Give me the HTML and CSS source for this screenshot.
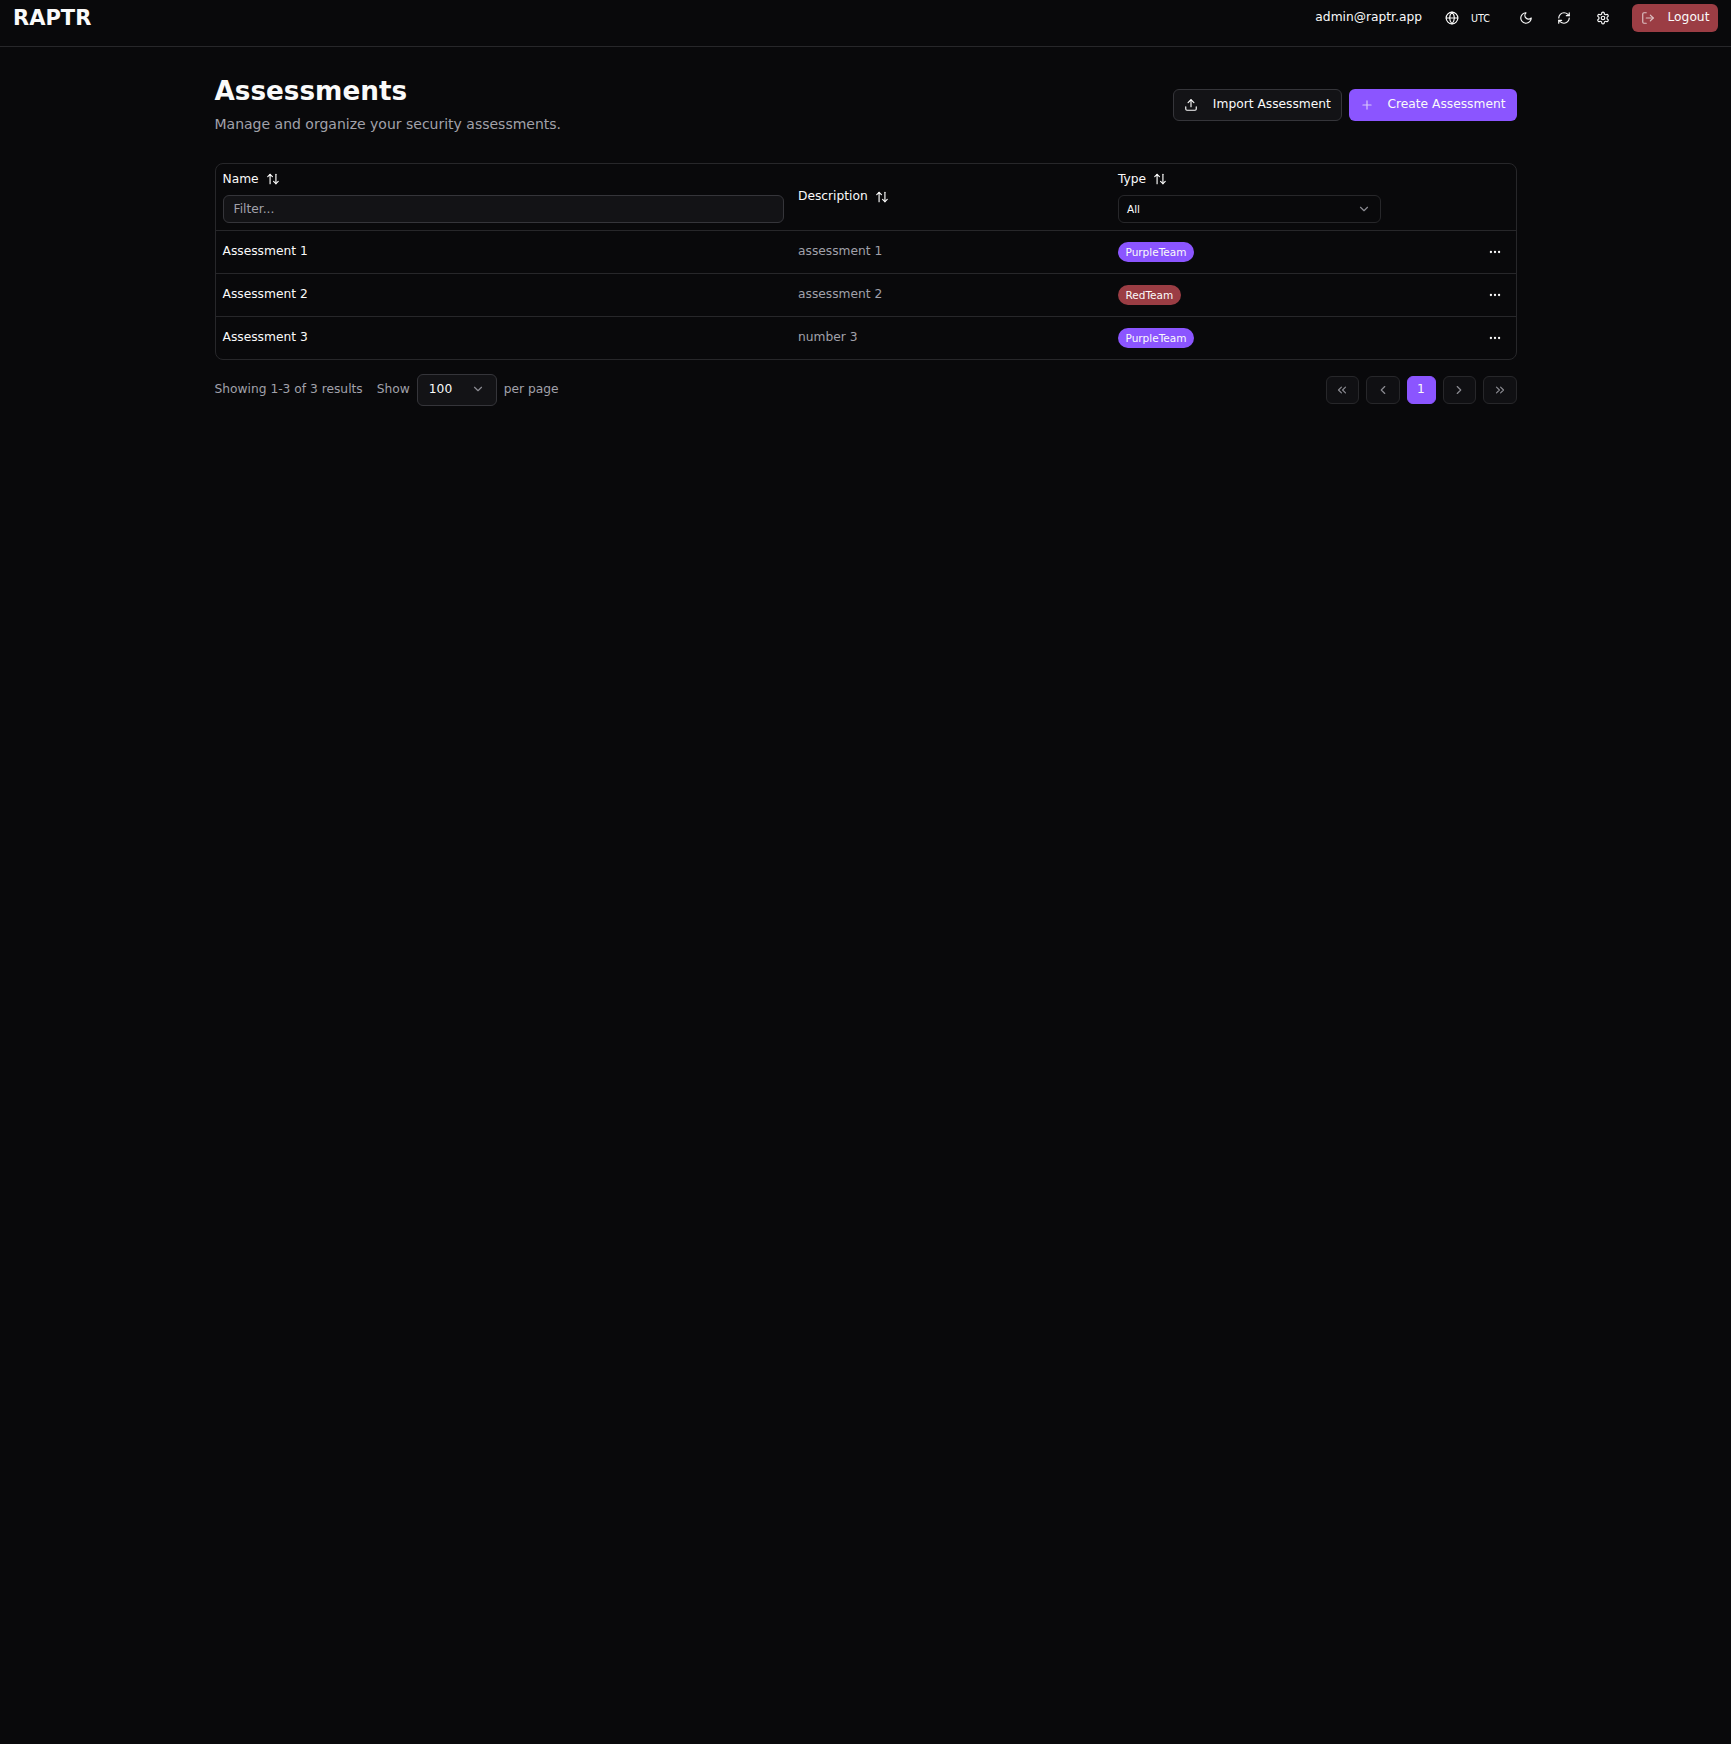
FILE: index.html
```html
<!DOCTYPE html>
<html lang="en">
<head>
    <meta charset="UTF-8">
    <meta name="viewport" content="width=device-width, initial-scale=1.0">
    <title>RAPTR - Assessments</title>
    <link rel="stylesheet" href="styles.css">
</head>
<body>

    <header class="topbar">
        <div class="logo">RAPTR</div>
        <div class="topbar-right">
            <span class="user-email">admin@raptr.app</span>
            <div class="tz">
                <svg class="icon icon-14" viewBox="0 0 24 24"><circle cx="12" cy="12" r="10"/><path d="M12 2a14.5 14.5 0 0 0 0 20 14.5 14.5 0 0 0 0-20"/><path d="M2 12h20"/></svg>
                <span class="tz-label">UTC</span>
            </div>
            <button class="icon-btn"><svg class="icon icon-14" viewBox="0 0 24 24"><path d="M12 3a6 6 0 0 0 9 9 9 9 0 1 1-9-9Z"/></svg></button>
            <button class="icon-btn"><svg class="icon icon-14" viewBox="0 0 24 24"><path d="M3 12a9 9 0 0 1 9-9 9.75 9.75 0 0 1 6.74 2.74L21 8"/><path d="M21 3v5h-5"/><path d="M21 12a9 9 0 0 1-9 9 9.75 9.75 0 0 1-6.74-2.74L3 16"/><path d="M8 16H3v5"/></svg></button>
            <button class="icon-btn"><svg class="icon icon-14" viewBox="0 0 24 24"><path d="M12.22 2h-.44a2 2 0 0 0-2 2v.18a2 2 0 0 1-1 1.73l-.43.25a2 2 0 0 1-2 0l-.15-.08a2 2 0 0 0-2.73.73l-.22.38a2 2 0 0 0 .73 2.73l.15.1a2 2 0 0 1 1 1.72v.51a2 2 0 0 1-1 1.74l-.15.09a2 2 0 0 0-.73 2.73l.22.38a2 2 0 0 0 2.73.73l.15-.08a2 2 0 0 1 2 0l.43.25a2 2 0 0 1 1 1.73V20a2 2 0 0 0 2 2h.44a2 2 0 0 0 2-2v-.18a2 2 0 0 1 1-1.73l.43-.25a2 2 0 0 1 2 0l.15.08a2 2 0 0 0 2.73-.73l.22-.39a2 2 0 0 0-.73-2.73l-.15-.08a2 2 0 0 1-1-1.74v-.5a2 2 0 0 1 1-1.74l.15-.09a2 2 0 0 0 .73-2.73l-.22-.38a2 2 0 0 0-2.73-.73l-.15.08a2 2 0 0 1-2 0l-.43-.25a2 2 0 0 1-1-1.73V4a2 2 0 0 0-2-2z"/><circle cx="12" cy="12" r="3"/></svg></button>
            <button class="btn btn-logout">
                <svg class="icon icon-14 dim" viewBox="0 0 24 24"><path d="M9 21H5a2 2 0 0 1-2-2V5a2 2 0 0 1 2-2h4"/><polyline points="16 17 21 12 16 7"/><line x1="21" y1="12" x2="9" y2="12"/></svg>
                <span>Logout</span>
            </button>
        </div>
    </header>

    <main class="page">
        <div class="page-head">
            <div>
                <h1>Assessments</h1>
                <p class="subtitle">Manage and organize your security assessments.</p>
            </div>
            <div class="head-actions">
                <button class="btn btn-outline">
                    <svg class="icon icon-14" viewBox="0 0 24 24"><path d="M21 15v4a2 2 0 0 1-2 2H5a2 2 0 0 1-2-2v-4"/><polyline points="17 8 12 3 7 8"/><line x1="12" y1="3" x2="12" y2="15"/></svg>
                    <span>Import Assessment</span>
                </button>
                <button class="btn btn-primary">
                    <svg class="icon icon-14 dim" viewBox="0 0 24 24"><path d="M5 12h14"/><path d="M12 5v14"/></svg>
                    <span>Create Assessment</span>
                </button>
            </div>
        </div>

        <div class="table-wrap">
            <table>
                <colgroup>
                    <col class="col-name">
                    <col class="col-desc">
                    <col class="col-type">
                    <col>
                </colgroup>
                <thead>
                    <tr>
                        <th>
                            <div class="th-label">Name <svg class="icon icon-14 sort" viewBox="0 0 24 24"><path d="m21 16-4 4-4-4"/><path d="M17 20V4"/><path d="m3 8 4-4 4 4"/><path d="M7 4v16"/></svg></div>
                            <input class="filter-input" type="text" placeholder="Filter...">
                        </th>
                        <th class="th-desc">
                            <div class="th-label">Description <svg class="icon icon-14 sort" viewBox="0 0 24 24"><path d="m21 16-4 4-4-4"/><path d="M17 20V4"/><path d="m3 8 4-4 4 4"/><path d="M7 4v16"/></svg></div>
                        </th>
                        <th>
                            <div class="th-label">Type <svg class="icon icon-14 sort" viewBox="0 0 24 24"><path d="m21 16-4 4-4-4"/><path d="M17 20V4"/><path d="m3 8 4-4 4 4"/><path d="M7 4v16"/></svg></div>
                            <div class="filter-select">
                                <span>All</span>
                                <svg class="icon icon-14 muted" viewBox="0 0 24 24"><path d="m6 9 6 6 6-6"/></svg>
                            </div>
                        </th>
                        <th></th>
                    </tr>
                </thead>
                <tbody>
                    <tr>
                        <td class="cell-name">Assessment 1</td>
                        <td class="cell-desc">assessment 1</td>
                        <td><span class="badge badge-purple">PurpleTeam</span></td>
                        <td class="cell-actions"><svg class="icon icon-14" viewBox="0 0 24 24"><circle cx="12" cy="12" r="1"/><circle cx="19" cy="12" r="1"/><circle cx="5" cy="12" r="1"/></svg></td>
                    </tr>
                    <tr>
                        <td class="cell-name">Assessment 2</td>
                        <td class="cell-desc">assessment 2</td>
                        <td><span class="badge badge-red">RedTeam</span></td>
                        <td class="cell-actions"><svg class="icon icon-14" viewBox="0 0 24 24"><circle cx="12" cy="12" r="1"/><circle cx="19" cy="12" r="1"/><circle cx="5" cy="12" r="1"/></svg></td>
                    </tr>
                    <tr>
                        <td class="cell-name">Assessment 3</td>
                        <td class="cell-desc">number 3</td>
                        <td><span class="badge badge-purple">PurpleTeam</span></td>
                        <td class="cell-actions"><svg class="icon icon-14" viewBox="0 0 24 24"><circle cx="12" cy="12" r="1"/><circle cx="19" cy="12" r="1"/><circle cx="5" cy="12" r="1"/></svg></td>
                    </tr>
                </tbody>
            </table>
        </div>

        <div class="table-foot">
            <div class="foot-left">
                <span class="foot-text results">Showing 1-3 of 3 results</span>
                <span class="foot-text">Show</span>
                <div class="per-page">
                    <span>100</span>
                    <svg class="icon icon-14 muted" viewBox="0 0 24 24"><path d="m6 9 6 6 6-6"/></svg>
                </div>
                <span class="foot-text">per page</span>
            </div>
            <div class="pager">
                <button class="page-btn"><svg class="icon icon-14" viewBox="0 0 24 24"><path d="m11 17-5-5 5-5"/><path d="m18 17-5-5 5-5"/></svg></button>
                <button class="page-btn"><svg class="icon icon-14" viewBox="0 0 24 24"><path d="m15 18-6-6 6-6"/></svg></button>
                <button class="page-btn page-current">1</button>
                <button class="page-btn"><svg class="icon icon-14" viewBox="0 0 24 24"><path d="m9 18 6-6-6-6"/></svg></button>
                <button class="page-btn"><svg class="icon icon-14" viewBox="0 0 24 24"><path d="m6 17 5-5-5-5"/><path d="m13 17 5-5-5-5"/></svg></button>
            </div>
        </div>
    </main>

</body>
</html>
```

FILE: styles.css
```css
* {
    box-sizing: border-box;
}
html, body {
    height: 100%;
}
body {
    margin: 0;
    background: #09090b;
    color: #fafafa;
    font-family: "DejaVu Sans", sans-serif;
    font-size: 12.25px;
}
button {
    font-family: inherit;
    color: inherit;
    cursor: pointer;
}
.icon {
    fill: none;
    stroke: currentColor;
    stroke-width: 2;
    stroke-linecap: round;
    stroke-linejoin: round;
    flex: none;
}
.icon-14 {
    width: 14px;
    height: 14px;
}
.dim {
    opacity: 0.7;
}
.muted {
    color: #8b8b92;
}

/* top bar */
.topbar {
    height: 47px;
    border-bottom: 1px solid #27272a;
    padding: 4px 13px 0 13px;
    display: flex;
    justify-content: space-between;
    align-items: flex-start;
}
.logo {
    font-size: 21px;
    font-weight: 700;
    line-height: 28px;
}
.topbar-right {
    display: flex;
    align-items: center;
    height: 28px;
}
.user-email {
    margin-right: 23px;
    margin-bottom: 3px;
}
.tz {
    display: flex;
    align-items: center;
    gap: 12px;
    margin-right: 16.5px;
}
.tz-label {
    font-size: 9.6px;
}
.icon-btn {
    width: 38.5px;
    height: 28px;
    background: none;
    border: none;
    padding: 0;
    display: flex;
    align-items: center;
    justify-content: center;
}
.btn {
    display: inline-flex;
    align-items: center;
    border-radius: 6px;
    border: 1px solid transparent;
    font-size: 12.25px;
    padding: 0;
}
.btn-logout {
    width: 86px;
    height: 28px;
    margin-left: 10px;
    background: #9b3d44;
    padding-left: 8px;
    gap: 12.5px;
}
.btn-logout span {
    margin-bottom: 3px;
}

/* page */
.page {
    width: 1302px;
    margin: 0 auto;
}
.page-head {
    display: flex;
    justify-content: space-between;
    align-items: center;
    height: 116px;
    padding-bottom: 3px;
}
h1 {
    margin: 0 0 5px;
    font-size: 26.25px;
    font-weight: 700;
    line-height: 36px;
}
.subtitle {
    margin: 0;
    font-size: 14px;
    line-height: 20px;
    color: #a1a1aa;
}
.head-actions {
    display: flex;
    gap: 7px;
    margin-top: 3px;
}
.head-actions .btn {
    height: 32px;
    gap: 14.5px;
    padding: 0 10px 2.5px 10px;
}
.head-actions .btn-primary {
    gap: 13.5px;
}
.head-actions .icon {
    margin-top: 2.5px;
}
.btn-outline {
    background: #131316;
    border-color: #35353a;
}
.btn-primary {
    background: #8b55ff;
}

/* table */
.table-wrap {
    border: 1px solid #27272a;
    border-radius: 8px;
}
table {
    width: 100%;
    border-collapse: collapse;
    table-layout: fixed;
}
.col-name {
    width: 575.5px;
}
.col-desc {
    width: 320px;
}
.col-type {
    width: 280px;
}
th {
    height: 66px;
    padding: 0 7px 2px;
    text-align: left;
    font-weight: 400;
    vertical-align: middle;
    border-bottom: 1px solid #27272a;
}
.th-label {
    display: flex;
    align-items: center;
    gap: 7px;
    line-height: 20px;
}
.sort {
    margin-top: 1px;
}
.th-desc .sort {
    margin-top: 3px;
}
.filter-input {
    display: block;
    width: 561px;
    height: 28px;
    margin: 6px 0 0 0;
    padding: 0 10px;
    background: #131316;
    border: 1px solid #35353a;
    border-radius: 6px;
    color: #fafafa;
    font-family: inherit;
    font-size: 12.25px;
    outline: none;
}
.filter-input::placeholder {
    color: #a1a1aa;
}
.filter-select {
    display: flex;
    align-items: center;
    justify-content: space-between;
    width: 263px;
    height: 28px;
    margin-top: 6px;
    padding: 0 9px 0 8px;
    border: 1px solid #27272a;
    border-radius: 6px;
    font-size: 10.5px;
}
td {
    height: 43px;
    padding: 0 7px;
    border-bottom: 1px solid #27272a;
}
tbody tr:last-child td {
    border-bottom: none;
}
.cell-name {
    padding-bottom: 1px;
}
.cell-desc {
    padding-bottom: 1px;
    color: #a1a1aa;
}
.badge {
    display: inline-block;
    height: 20px;
    padding: 0 7.5px;
    border-radius: 10px;
    font-size: 10.5px;
    line-height: 21px;
    vertical-align: middle;
}
.badge-purple {
    background: #8b55ff;
}
.badge-red {
    background: #9b3d44;
}
.cell-actions {
    text-align: right;
    padding-right: 14px;
    line-height: 14px;
}
.cell-actions .icon {
    display: inline-block;
    vertical-align: middle;
}

/* footer */
.table-foot {
    display: flex;
    justify-content: space-between;
    align-items: center;
    margin-top: 14px;
    height: 32px;
}
.foot-left {
    display: flex;
    align-items: center;
    gap: 7px;
    color: #a1a1aa;
}
.foot-text {
    margin-bottom: 3px;
}
.results {
    margin-right: 7px;
}
.per-page {
    display: flex;
    align-items: center;
    justify-content: space-between;
    width: 80px;
    height: 32px;
    padding: 0 11px 2px;
    background: #131316;
    border: 1px solid #35353a;
    border-radius: 6px;
    color: #fafafa;
}
.pager {
    display: flex;
    gap: 7px;
}
.page-btn {
    width: 33px;
    height: 28px;
    padding: 0;
    display: flex;
    align-items: center;
    justify-content: center;
    background: #101013;
    border: 1px solid #27272a;
    border-radius: 6px;
    color: #8b8b92;
    font-size: 12.25px;
}
.page-btn:nth-child(2),
.page-btn:nth-child(5) {
    width: 34px;
}
.page-current {
    width: 29px;
    background: #8b55ff;
    border-color: #8b55ff;
    color: #fafafa;
    padding-bottom: 3px;
}
```
